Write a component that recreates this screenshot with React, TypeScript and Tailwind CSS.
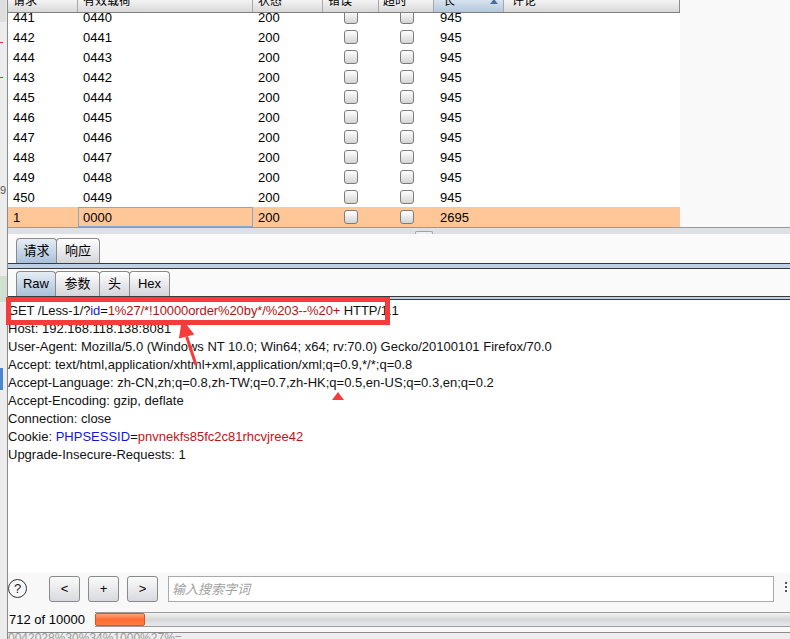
import React from "react";

const FONT = "font-['Liberation_Sans','Noto_Sans_CJK_SC',sans-serif]";

const rows = [
  ["441", "0440"],
  ["442", "0441"],
  ["444", "0443"],
  ["443", "0442"],
  ["445", "0444"],
  ["446", "0445"],
  ["447", "0446"],
  ["448", "0447"],
  ["449", "0448"],
  ["450", "0449"],
];

function Checkbox() {
  return (
    <span className="block w-[14px] h-[14px] rounded-[3px] border border-[#7c7c7c] bg-linear-to-b from-white to-[#d4d4d4]" />
  );
}

function Row({ req, payload, len, selected }: { req: string; payload: string; len: string; selected?: boolean }) {
  return (
    <div className={`flex h-[20px] items-center text-[13px] text-black ${selected ? "bg-[#ffc797]" : "bg-white"}`}>
      <div className="w-[70px] pl-[5px] pt-[1px]">{req}</div>
      <div
        className={`w-[175px] h-full flex items-center pt-[1px] ${
          selected ? "border border-[#84a8d2] pl-[4px]" : "pl-[5px]"
        }`}
      >
        {payload}
      </div>
      <div className="w-[70px] pl-[5px] pt-[1px]">200</div>
      <div className="w-[56px] flex justify-center">
        <Checkbox />
      </div>
      <div className="w-[55px] flex justify-center">
        <Checkbox />
      </div>
      <div className="w-[70px] pl-[6px] pt-[1px]">{len}</div>
      <div className="w-[176px]" />
    </div>
  );
}

function Tab({ label, w, active }: { label: string; w: string; active?: boolean }) {
  return (
    <div
      className={`${w} h-[25px] -ml-px first:ml-0 flex items-center justify-center rounded-t-[4px] border border-b-0 border-[#8a8a8a] text-[13px] text-black ${
        active ? "bg-linear-to-b from-[#e6edf5] to-[#a9c1d9]" : "bg-linear-to-b from-white to-[#d4d5da]"
      }`}
    >
      {label}
    </div>
  );
}

function ToolButton({ label }: { label: string }) {
  return (
    <div className="w-[31px] h-[26px] flex items-center justify-center rounded-[3px] border border-[#8a8a8a] bg-linear-to-b from-[#fbfbfb] to-[#d8d9de] text-[13px] text-black">
      {label}
    </div>
  );
}

export default function App() {
  return (
    <div className={`relative w-[790px] h-[639px] overflow-hidden flex bg-[#f0f0f0] ${FONT}`}>
      {/* background window peeking on the left */}
      <div className="relative w-[8px] h-full bg-[#ececec] border-r border-[#8a8a8a]">
        <div className="absolute left-0 top-0 w-[6px] h-[22px] bg-[#dedede]" />
        <div className="absolute left-0 top-[42px] w-[3px] h-[1px] bg-[#e03030]" />
        <div className="absolute left-0 top-[77px] w-[3px] h-[1px] bg-[#e03030]" />
        <div className="absolute left-0 top-[184px] text-[11px] leading-[12px] text-[#555]">9</div>
        <div className="absolute left-0 top-[276px] w-[7px] h-[26px] bg-[#cfe0cf]" />
        <div className="absolute left-0 top-[368px] w-[3px] h-[22px] bg-[#4a86cc]" />
      </div>

      <div className="flex-1 flex flex-col">
        {/* results table */}
        <div className="h-[227px] flex">
          <div className="w-[672px] flex flex-col bg-white">
            <div className="h-[13px] flex overflow-hidden border-b border-[#808080] bg-linear-to-b from-[#f4f4f4] to-[#d8d8d8] text-[12px] text-black">
              <div className="w-[70px] border-r border-[#a8a8a8] pl-[5px]">
                <span className="block -mt-[6px] leading-[14px]">请求</span>
              </div>
              <div className="w-[175px] border-r border-[#a8a8a8] pl-[5px]">
                <span className="block -mt-[6px] leading-[14px]">有效载荷</span>
              </div>
              <div className="w-[70px] border-r border-[#a8a8a8] pl-[5px]">
                <span className="block -mt-[6px] leading-[14px]">状态</span>
              </div>
              <div className="w-[56px] border-r border-[#a8a8a8] pl-[5px]">
                <span className="block -mt-[6px] leading-[14px]">错误</span>
              </div>
              <div className="w-[55px] border-r border-[#a8a8a8] pl-[4px]">
                <span className="block -mt-[6px] leading-[14px]">超时</span>
              </div>
              <div className="w-[70px] border-r border-[#a8a8a8] pl-[9px] flex justify-between bg-linear-to-b from-[#d8e4ef] to-[#b3c8dd]">
                <span className="block -mt-[6px] leading-[14px]">长</span>
                <svg width="8" height="6" viewBox="0 0 8 6" className="mr-[5px]">
                  <path d="M0 4 L4 -1 L8 4 Z" fill="#4c6d9e" />
                </svg>
              </div>
              <div className="w-[176px] border-r border-[#8a8a8a] pl-[8px]">
                <span className="block -mt-[6px] leading-[14px]">评论</span>
              </div>
            </div>
            <div className="flex-1 overflow-hidden">
              <div className="-mt-[6px]">
                {rows.map(([r, p]) => (
                  <Row key={r} req={r} payload={p} len="945" />
                ))}
                <Row req="1" payload="0000" len="2695" selected />
              </div>
            </div>
          </div>
          <div className="flex-1 bg-[#f9f9f9]" />
        </div>

        {/* split divider */}
        <div className="h-[1px] bg-[#9a9a9a]" />
        <div className="h-[6px] bg-[#dde0e4] flex justify-start">
          <div className="ml-[407px] mt-[3px] w-[18px] h-[3px] rounded-t-[2px] border border-b-0 border-[#a0a4aa] bg-[#eceef0]" />
        </div>

        {/* request / response tabs */}
        <div className="bg-[#fafafa] pt-[4px] pl-[8px] flex">
          <Tab label="请求" w="w-[41px]" active />
          <Tab label="响应" w="w-[44px]" />
        </div>
        <div className="h-[1px] bg-[#3a3a3a]" />
        <div className="h-[4px] bg-[#bdd0e5]" />
        <div className="h-[1px] bg-[#3a3a3a]" />
        <div className="bg-[#fafafa] pt-[2px] pl-[8px] flex">
          <Tab label="Raw" w="w-[40px]" active />
          <Tab label="参数" w="w-[45px]" />
          <Tab label="头" w="w-[31px]" />
          <Tab label="Hex" w="w-[41px]" />
        </div>
        <div className="h-[1px] bg-[#3a3a3a]" />
        <div className="h-[2px] bg-[#bdd0e5]" />
        <div className="h-[1px] bg-[#3a3a3a]" />

        {/* raw request */}
        <div className="relative h-[273px] bg-white pt-[2px] text-[13px] leading-[18px] text-[#111] whitespace-pre">
          <div className="tracking-[-0.1px]">
            GET /Less-1/?<span className="text-[#1b1bb8]">id</span>=
            <span className="text-[#b01414]">1%27/*!10000order%20by*/%203--%20+</span> HTTP/1.1
          </div>
          <div>Host: 192.168.118.138:8081</div>
          <div>User-Agent: Mozilla/5.0 (Windows NT 10.0; Win64; x64; rv:70.0) Gecko/20100101 Firefox/70.0</div>
          <div>Accept: text/html,application/xhtml+xml,application/xml;q=0.9,*/*;q=0.8</div>
          <div>Accept-Language: zh-CN,zh;q=0.8,zh-TW;q=0.7,zh-HK;q=0.5,en-US;q=0.3,en;q=0.2</div>
          <div>Accept-Encoding: gzip, deflate</div>
          <div>Connection: close</div>
          <div>
            Cookie: <span className="text-[#1414e0]">PHPSESSID</span>=
            <span className="text-[#c01414]">pnvnekfs85fc2c81rhcvjree42</span>
          </div>
          <div>Upgrade-Insecure-Requests: 1</div>
        </div>

        {/* search toolbar */}
        <div className="h-[34px] bg-[#f8f8f8] flex items-start pt-[3px]">
          <div className="mt-[3px] w-[19px] h-[19px] rounded-full border-[1.5px] border-[#333] flex items-center justify-center text-[13px] leading-none text-[#222]">
            ?
          </div>
          <div className="ml-[22px] flex gap-[8px]">
            <ToolButton label="<" />
            <ToolButton label="+" />
            <ToolButton label=">" />
          </div>
          <input
            className="ml-[10px] w-[606px] h-[26px] border border-[#a9a9a9] bg-white pl-[3px] text-[13px] outline-none placeholder:text-[#a0a0a0] placeholder:italic"
            placeholder="输入搜索字词"
          />
          <div className="ml-[11px] mt-[6px] flex flex-col gap-[2px]">
            <span className="block w-[2px] h-[2px] bg-[#555]" />
            <span className="block w-[2px] h-[2px] bg-[#555]" />
            <span className="block w-[2px] h-[2px] bg-[#555]" />
          </div>
        </div>

        {/* progress */}
        <div className="h-[25px] bg-[#f8f8f8] flex items-center">
          <span className="w-[87px] pl-[1px] text-[13px] text-black">712 of 10000</span>
          <div className="flex-1 h-[15px] border-t border-b border-[#9c9c9c] bg-linear-to-b from-[#f2f2f2] via-[#d6d7da] to-[#e8e9ec] flex">
            <div className="w-[50px] h-full rounded-[2px] border border-[#e2501e] bg-linear-to-b from-[#ffa27a] via-[#ff6a30] to-[#ff7c44]" />
          </div>
        </div>

        {/* window behind */}
        <div className="h-[7px] overflow-hidden border-t border-[#8a8a8a] bg-[#ededed]">
          <div className="-mt-[2px] text-[12px] leading-[14px] text-[#9a9a9a] whitespace-pre">0042028%30%34%1000%27%=</div>
        </div>
      </div>

      {/* annotations */}
      <div className="absolute left-[6px] top-[297px] w-[384px] h-[28px] border-[5px] border-[#f73a3a]" />
      <svg className="absolute left-[170px] top-[315px]" width="40" height="60" viewBox="0 0 40 60">
        <line x1="16.6" y1="21.4" x2="26" y2="50" stroke="#f73a3a" strokeWidth="3" />
        <polygon points="12,4 24.3,19.4 8.9,23.4" fill="#f73a3a" />
      </svg>
      <svg className="absolute left-[331px] top-[391px]" width="14" height="10" viewBox="0 0 14 10">
        <polygon points="7,1 13,9 1,9" fill="#f73a3a" />
      </svg>
    </div>
  );
}
